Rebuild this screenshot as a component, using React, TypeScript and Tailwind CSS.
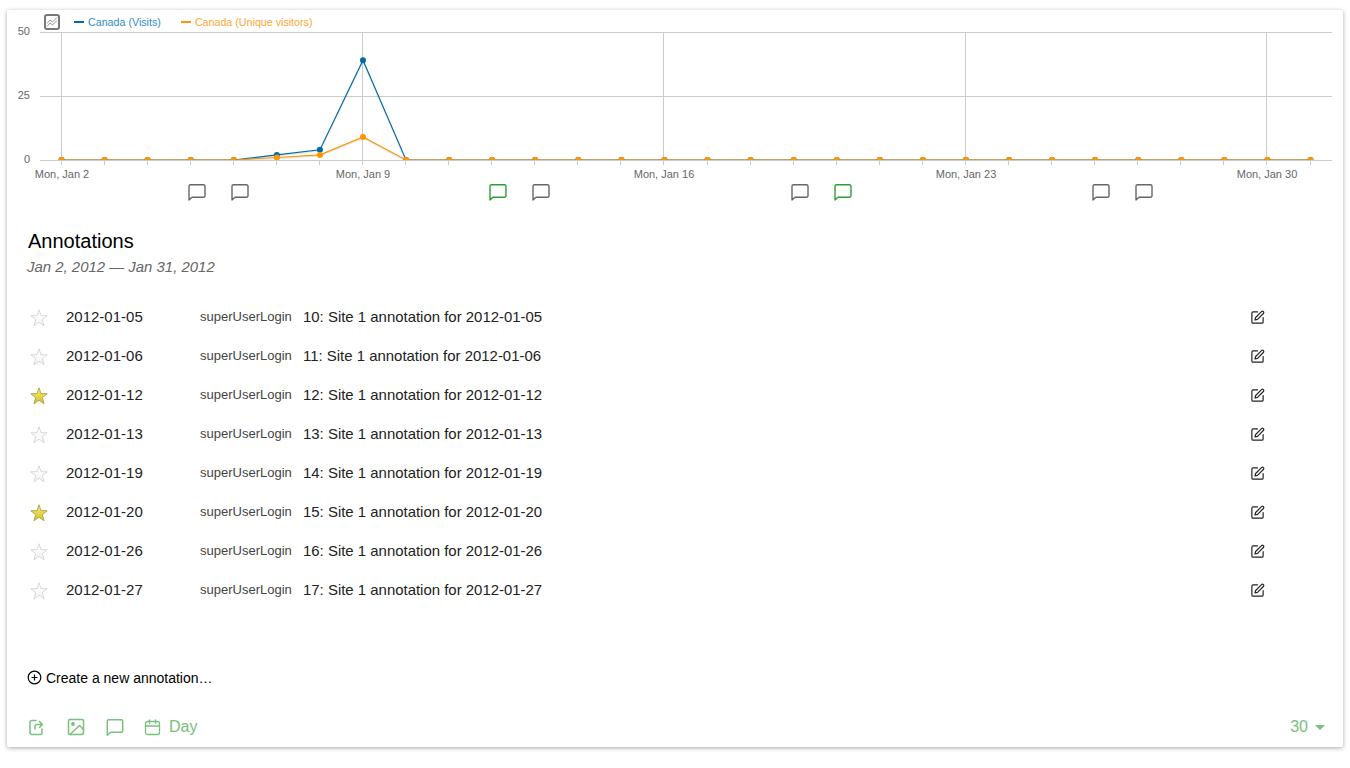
const SANS = 'font-["Liberation_Sans",Arial,sans-serif]';

const rows = [
  { date: '2012-01-05', text: '10: Site 1 annotation for 2012-01-05', starred: false },
  { date: '2012-01-06', text: '11: Site 1 annotation for 2012-01-06', starred: false },
  { date: '2012-01-12', text: '12: Site 1 annotation for 2012-01-12', starred: true },
  { date: '2012-01-13', text: '13: Site 1 annotation for 2012-01-13', starred: false },
  { date: '2012-01-19', text: '14: Site 1 annotation for 2012-01-19', starred: false },
  { date: '2012-01-20', text: '15: Site 1 annotation for 2012-01-20', starred: true },
  { date: '2012-01-26', text: '16: Site 1 annotation for 2012-01-26', starred: false },
  { date: '2012-01-27', text: '17: Site 1 annotation for 2012-01-27', starred: false },
];

// chart helpers, all in page coordinates (the svg viewBox starts at the card's corner)
const xAt = (i: number) => 61.5 + i * 43.07;
const tickAt = (i: number) => Math.floor(61 + i * 43.07) + 0.5;
const yAt = (v: number) => 160 - v * 2.56;
const days = Array.from({ length: 30 }, (_, i) => i);
const visits = days.map((i) => (i === 5 ? 2 : i === 6 ? 4 : i === 7 ? 39 : 0));
const uniques = days.map((i) => (i === 5 ? 1 : i === 6 ? 2 : i === 7 ? 9 : 0));
const toPoints = (vals: number[], dy = 0) => vals.map((v, i) => `${xAt(i)},${yAt(v) + dy}`).join(' ');

const weekLabels = [
  { i: 0, label: 'Mon, Jan 2' },
  { i: 7, label: 'Mon, Jan 9' },
  { i: 14, label: 'Mon, Jan 16' },
  { i: 21, label: 'Mon, Jan 23' },
  { i: 28, label: 'Mon, Jan 30' },
];

const bubbles = [
  { x: 197, green: false },
  { x: 240, green: false },
  { x: 498, green: true },
  { x: 541, green: false },
  { x: 800, green: false },
  { x: 843, green: true },
  { x: 1101, green: false },
  { x: 1144, green: false },
];

function Chart() {
  return (
    <svg width="1336" height="195" viewBox="7 10 1336 195" className="block">
      <defs>
        <clipPath id="plot">
          <rect x="40" y="20" width="1292" height="140" />
        </clipPath>
      </defs>

      {/* grid */}
      {[32.5, 96.5, 160.5].map((y) => (
        <line key={y} x1="40" x2="1332" y1={y} y2={y} stroke="#cccccc" />
      ))}
      {weekLabels.map(({ i }) => (
        <line key={i} x1={tickAt(i)} x2={tickAt(i)} y1="32" y2="165" stroke="#cccccc" />
      ))}
      {days.map((i) => (
        <line key={i} x1={tickAt(i)} x2={tickAt(i)} y1="161" y2="165" stroke="#cccccc" />
      ))}

      {/* axis labels */}
      <g fontFamily='"Liberation Sans", Arial, sans-serif' fontSize="11" fill="#666666">
        <text x="30" y="35" textAnchor="end">50</text>
        <text x="30" y="99" textAnchor="end">25</text>
        <text x="30" y="163" textAnchor="end">0</text>
        {weekLabels.map(({ i, label }) => (
          <text key={i} x={tickAt(i) + 0.5} y="178" textAnchor="middle">{label}</text>
        ))}
      </g>

      {/* series */}
      <g clipPath="url(#plot)" fill="none">
        <polyline points={toPoints(visits, 1)} stroke="#000000" strokeOpacity="0.1" strokeWidth="1.5" />
        <polyline points={toPoints(visits)} stroke="#0069a6" strokeWidth="1.1" />
        <polyline points={toPoints(uniques, 1)} stroke="#000000" strokeOpacity="0.1" strokeWidth="1.5" />
        <polyline points={toPoints(uniques)} stroke="#ff9600" strokeWidth="1.1" />
        {visits.map((v, i) => (
          <circle key={i} cx={xAt(i)} cy={yAt(v)} r="3" fill="#0069a6" />
        ))}
        {uniques.map((v, i) => (
          <circle key={i} cx={xAt(i)} cy={yAt(v)} r="3" fill="#ff9600" />
        ))}
      </g>

      {/* annotation markers */}
      {bubbles.map(({ x, green }) => (
        <path
          key={x}
          d={`M${x - 6.5} 184.7h13a1.5 1.5 0 0 1 1.5 1.5v9.6a1.5 1.5 0 0 1-1.5 1.5h-11.5l-3 2.6v-13.7a1.5 1.5 0 0 1 1.5-1.5z`}
          fill="none"
          stroke={green ? '#2e9e38' : '#666666'}
          strokeWidth="1.4"
          strokeLinejoin="round"
        />
      ))}
    </svg>
  );
}

function ChartTypeIcon() {
  return (
    <svg width="16" height="16" viewBox="0 0 16 16" className="absolute left-[37px] top-[4px]">
      <rect x="1" y="1" width="14" height="14" rx="2" fill="#fff" stroke="#777" strokeWidth="2" />
      <path d="M3 9.5l3-3.5 2.5 2 4.5-4.5M3 12.5l3-3.5 2.5 2 4.5-4.5" fill="none" stroke="#888" strokeWidth="0.9" />
    </svg>
  );
}

function Star({ on }: { on: boolean }) {
  const id = on ? 'star-on' : 'star-off';
  return (
    <svg width="18" height="18" viewBox="0 0 18 18">
      <defs>
        <linearGradient id={id} x1="0" y1="0" x2="0" y2="1">
          <stop offset="0" stopColor={on ? '#f7ec7a' : '#ffffff'} />
          <stop offset="1" stopColor={on ? '#d9c021' : '#f4f4f4'} />
        </linearGradient>
      </defs>
      <polygon
        points="9,0.8 11,6.6 17.2,6.8 12.3,10.6 14.1,16.8 9,13.2 3.9,16.8 5.7,10.6 0.8,6.8 7,6.6"
        fill={`url(#${id})`}
        stroke={on ? '#a8a04a' : '#d4d4d4'}
        strokeWidth="0.9"
        strokeLinejoin="round"
      />
    </svg>
  );
}

function EditIcon() {
  return (
    <svg width="15" height="15" viewBox="0 0 24 24" fill="none" stroke="#222" strokeWidth="1.9" strokeLinecap="round" strokeLinejoin="round">
      <path d="M12 3H5a2 2 0 0 0-2 2v14a2 2 0 0 0 2 2h14a2 2 0 0 0 2-2v-7" />
      <path d="M18.4 2.6a2.1 2.1 0 1 1 3 3L12 15l-4 1 1-4z" />
    </svg>
  );
}

function FooterIcon({ children }: { children: React.ReactNode }) {
  return (
    <svg width="18" height="18" viewBox="0 0 18 18" fill="none" stroke="#79c07d" strokeWidth="1.5" strokeLinecap="round" strokeLinejoin="round">
      {children}
    </svg>
  );
}

export default function App() {
  return (
    <div className={`min-h-[768px] bg-white pt-[10px] px-[7px] ${SANS}`}>
      <div className="relative h-[737px] rounded-[2px] bg-white shadow-[0_1px_4px_rgba(0,0,0,0.35)] flex flex-col">
        <ChartTypeIcon />
        <div className="absolute left-[67px] top-[5px] flex items-center gap-[20px] text-[10.7px] leading-[14px]">
          <span className="flex items-center gap-[4px] text-[#2f8cc4]">
            <span className="w-[10px] h-[2px] bg-[#0069a6]" />
            Canada (Visits)
          </span>
          <span className="flex items-center gap-[4px] text-[#ffa733]">
            <span className="w-[10px] h-[2px] bg-[#ff9600]" />
            Canada (Unique visitors)
          </span>
        </div>

        <Chart />

        <div className="pl-[21px] pt-[24px]">
          <h2 className="text-[20px] leading-[24px] text-black">Annotations</h2>
          <p className="mt-[5px] -ml-px text-[14.95px] leading-[18px] italic text-[#666666]">Jan 2, 2012 — Jan 31, 2012</p>
        </div>

        <div className="mt-[22px] pl-[23px] pr-[78px]">
          {rows.map((row) => (
            <div key={row.date} className="flex h-[39px] items-center">
              <span className="w-[36px] flex pt-[1px]">
                <Star on={row.starred} />
              </span>
              <span className="w-[134px] text-[15px] text-[#222222]">{row.date}</span>
              <span className="w-[103px] pb-[2px] text-[13px] text-[#444444]">superUserLogin</span>
              <span className="flex-1 text-[14.95px] text-[#222222]">{row.text}</span>
              <EditIcon />
            </div>
          ))}
        </div>

        <div className="mt-[58px] pl-[20px] flex items-center gap-[3px] text-[14px] leading-[20px] text-black">
          <svg width="15" height="15" viewBox="0 0 15 15" fill="none" stroke="#000" strokeWidth="1.2" className="mb-[2px]">
            <circle cx="7.5" cy="7.5" r="6.3" />
            <path d="M7.5 4.5v6M4.5 7.5h6" />
          </svg>
          <span className="ml-[1px]">Create a new annotation…</span>
        </div>

        <div className="mt-auto mb-[10px] pl-[21px] pr-[18px] flex items-center h-[20px] text-[#79c07d] text-[16px]">
          <span className="w-[39px] flex">
            <FooterIcon>
              <path d="M8 2.5H4a2 2 0 0 0-2 2v10a2 2 0 0 0 2 2h8a2 2 0 0 0 2-2V11" />
              <path d="M7 11V8.5a2 2 0 0 1 2-2h5.5M11.5 3.5l3 3-3 3" />
            </FooterIcon>
          </span>
          <span className="w-[39px] flex">
            <FooterIcon>
              <rect x="1.5" y="1.5" width="15" height="15" rx="1.5" />
              <circle cx="6" cy="6" r="1.2" fill="#79c07d" />
              <path d="M16.5 11.5l-4-4L3 16.5" />
            </FooterIcon>
          </span>
          <span className="w-[38px] flex">
            <FooterIcon>
              <path d="M2.8 1.7h12.4a1.5 1.5 0 0 1 1.5 1.5v9.6a1.5 1.5 0 0 1-1.5 1.5H4.5l-3.2 2.8V3.2a1.5 1.5 0 0 1 1.5-1.5z" />
            </FooterIcon>
          </span>
          <span className="flex items-center gap-[7px]">
            <svg width="17" height="17" viewBox="0 0 17 17" fill="none" stroke="#79c07d" strokeWidth="1.3" strokeLinecap="round">
              <rect x="1.5" y="2.5" width="14" height="13" rx="2" />
              <path d="M1.5 7h14M5.5 1v3M11.5 1v3" />
            </svg>
            <span className="ml-[1px]">Day</span>
          </span>
          <span className="ml-auto flex items-center gap-[7px]">
            30
            <span className="w-0 h-0 border-x-[5px] border-x-transparent border-t-[5px] border-t-[#79c07d]" />
          </span>
        </div>
      </div>
    </div>
  );
}
